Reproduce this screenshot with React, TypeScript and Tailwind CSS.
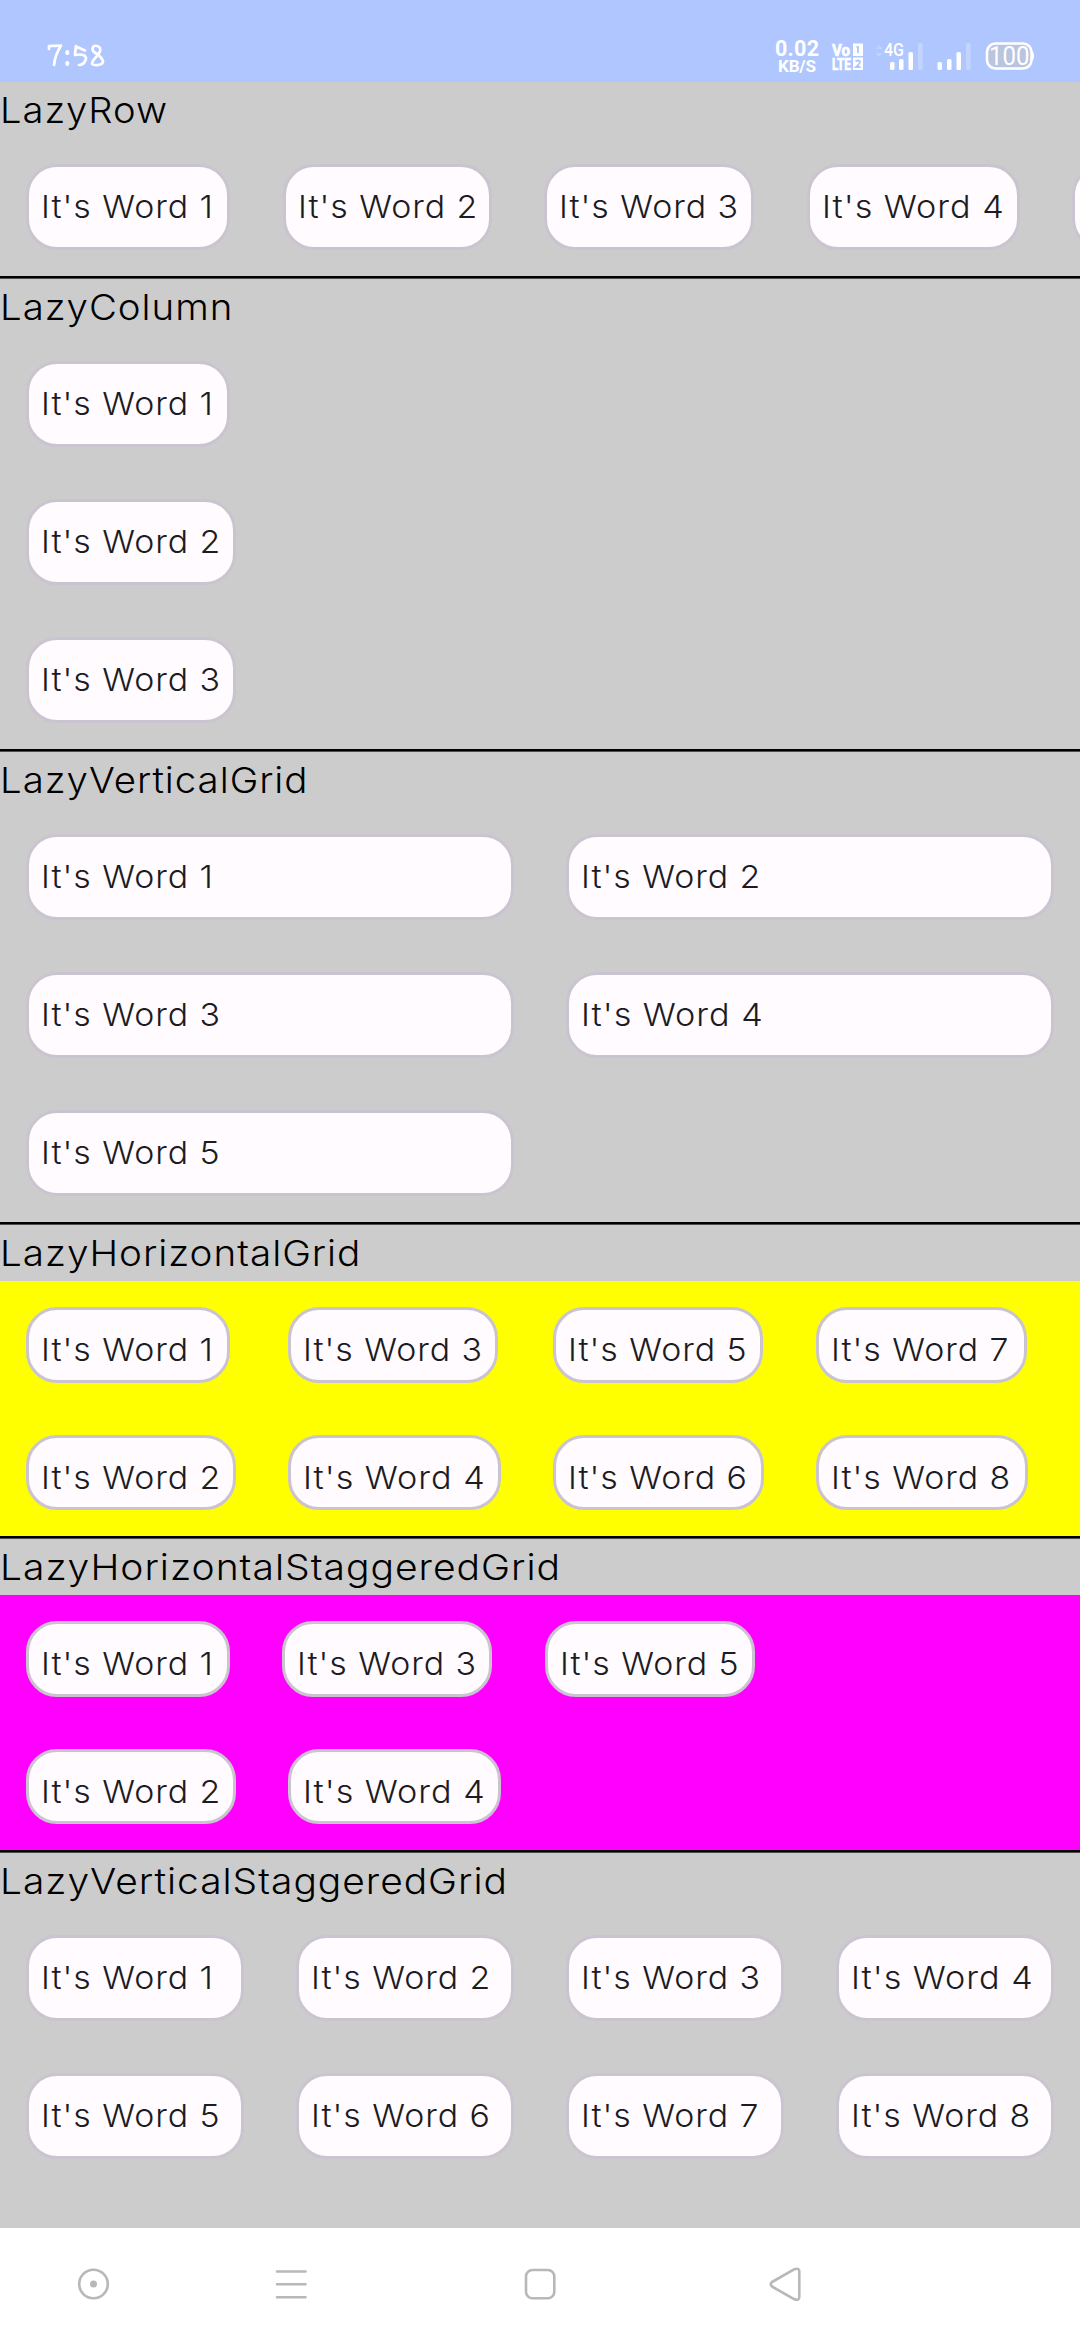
import React from "react";

function Word({ n, short = false, w }: { n: number; short?: boolean; w?: string }) {
  const stretch = n === 4 ? "scale-x-[1.075]" : "scale-x-[1.064]";
  return (
    <div
      className={`shrink-0 rounded-[31px] border-[3px] border-[#cac4d0] bg-[#fffbff] pl-[12px] ${
        short ? "pt-[13px]" : "h-[86px] pt-[13px]"
      } ${w ?? ""}`}
    >
      <div
        className={`h-[54px] w-max origin-left whitespace-nowrap text-[31.8px] leading-[54px] font-light tracking-[0.9px] text-[#1c1b1f] ${stretch}`}
      >
        It's Word {n}
      </div>
    </div>
  );
}

function Title({ children, stretch }: { children: string; stretch: string }) {
  return (
    <h2
      className={`h-[56px] w-max origin-left whitespace-nowrap text-[35.6px] leading-[57px] font-light tracking-[0.9px] text-black ${stretch}`}
    >
      {children}
    </h2>
  );
}

function Divider() {
  return <div className="h-[2.6px] shrink-0 border-b border-[#4d4d4d] bg-black" />;
}

const W: Record<number, string> = {
  1: "w-[204px]",
  2: "w-[209.5px]",
  3: "w-[210px]",
  4: "w-[213px]",
  5: "w-[210px]",
  6: "w-[211px]",
  7: "w-[211px]",
  8: "w-[212px]",
};

function StatusBar() {
  return (
    <header className="h-[82px] bg-[#b0c6ff]">
      <svg width="1080" height="82" viewBox="0 0 1080 82" fill="none">
        <g stroke="#fff" strokeWidth="2.7" strokeLinecap="round" strokeLinejoin="round">
          <path d="M49 49L49 46Q55 46 61 45.500Q55 55 54 65" />
          <path d="M67.300 52v1M67.300 63v1" strokeWidth="4" />
          <path d="M76 46L75 54M76 46.500L85 50.500M75 55Q86 53 86 59Q84 65 79 65" />
          <path d="M100 48Q98 45 94 46Q91 49 94 52Q101 56 103 61Q103 64 100 64.500Q95 66 92 64Q92 61 97 56Q101 52 100 48" />
        </g>
        <g fill="#fff" fontFamily="Roboto, sans-serif">
          <text x="775" y="56" fontSize="21.500" fontWeight="700" textLength="44">0.02</text>
          <text x="778" y="72" fontSize="17" fontWeight="700" textLength="38">KB/S</text>
          <g stroke="#fff" strokeWidth=".7">
            <text x="832" y="56" fontSize="17" fontWeight="700" textLength="18" lengthAdjust="spacingAndGlyphs">Vo</text>
            <text x="832" y="69.500" fontSize="16" fontWeight="700" textLength="19" lengthAdjust="spacingAndGlyphs">LTE</text>
          </g>
          <text x="884" y="56" fontSize="18" fontWeight="500" textLength="20" lengthAdjust="spacingAndGlyphs">4G</text>
        </g>
        <path fill="#fff" d="M853 43.500h10v12.500h-10zM853 57.500h10v12.500h-10z" />
        <path stroke="#b0c6ff" strokeWidth="1.800" d="M856.500 47h1.500v6M855.500 61.500Q858 59.500 860 61.500Q860 63.500 856 67h4.500" />
        <path fill="#c3d3ff" d="M875.500 49l3.500-4 3.500 4zM875.500 53l3.500 4 3.500-4z" />
        <g fill="#fff">
          <rect x="890" y="62" width="4.500" height="8" rx="1.500" />
          <rect x="899" y="59" width="4.500" height="11" rx="1.500" />
          <rect x="908.500" y="52" width="4.500" height="18" rx="1.500" />
          <rect x="918" y="43" width="4.500" height="27" rx="1.500" opacity=".25" />
          <rect x="937.500" y="62" width="4.500" height="8" rx="1.500" />
          <rect x="947" y="59" width="4.500" height="11" rx="1.500" />
          <rect x="956.500" y="52" width="4.500" height="18" rx="1.500" />
          <rect x="966" y="43" width="4.500" height="27" rx="1.500" opacity=".25" />
        </g>
        <rect x="987" y="43.500" width="44.500" height="25" rx="8.500" fill="#b9c4df" stroke="#fff" strokeWidth="2.600" />
        <path fill="#fff" d="M1032 51q2 1 2 5t-2 5z" />
        <text x="989" y="64.500" fontSize="25" fill="#fff" fontFamily="Roboto, sans-serif" textLength="40.500" lengthAdjust="spacingAndGlyphs">100</text>
      </svg>
    </header>
  );
}

function NavBar() {
  return (
    <nav className="h-[112px] bg-white">
      <svg width="1080" height="112" viewBox="0 0 1080 112" fill="none" stroke="#b8b8b8" strokeWidth="2.600">
        <circle cx="93.500" cy="56" r="14.300" />
        <circle cx="93.500" cy="56" r="3.500" fill="#b8b8b8" stroke="none" />
        <path strokeLinecap="round" d="M277 43.500h28.500M277 56.300h28.500M277 69.200h28.500" />
        <rect x="526" y="42" width="28.300" height="28.300" rx="6.500" />
        <path strokeLinejoin="round" d="M772 54L794.500 41.200Q799.300 39.500 799.300 43.500V69Q799.300 73 794.500 71.300L772 58.500Q769.500 56.300 772 54Z" />
      </svg>
    </nav>
  );
}

export default function App() {
  return (
    <div className="flex h-[2340px] w-[1080px] flex-col overflow-hidden bg-[#cccccc] font-['Inter',sans-serif]">
      <StatusBar />
      <section className="h-[194px]">
        <Title stretch="scale-x-[1.072]">LazyRow</Title>
        <div className="flex gap-[52.3px] overflow-hidden py-[26px] pl-[26.3px]">
          {[1, 2, 3, 4, 5].map((n) => <Word key={n} n={n} w={W[n]} />)}
        </div>
      </section>
      <Divider />
      <section className="h-[470.400px]">
        <Title stretch="scale-x-[1.08]">LazyColumn</Title>
        <div className="flex flex-col items-start gap-[52px] py-[26px] pl-[26.3px]">
          {[1, 2, 3].map((n) => <Word key={n} n={n} w={W[n]} />)}
        </div>
      </section>
      <Divider />
      <section className="h-[470.400px]">
        <Title stretch="scale-x-[1.08]">LazyVerticalGrid</Title>
        <div className="grid grid-cols-2 gap-[52px] px-[26px] py-[26px]">
          {[1, 2, 3, 4, 5].map((n) => <Word key={n} n={n} />)}
        </div>
      </section>
      <Divider />
      <section className="h-[311.400px]">
        <Title stretch="scale-x-[1.086]">LazyHorizontalGrid</Title>
        <div className="grid h-[255.400px] grid-flow-col grid-cols-[262px_265px_263px_264px] grid-rows-[76px_75px] justify-start gap-y-[52px] bg-[#ffff00] py-[26px] pl-[26px]">
          {[1, 2, 3, 4, 5, 6, 7, 8].map((n) => <Word key={n} n={n} short w={W[n]} />)}
        </div>
      </section>
      <Divider />
      <section className="h-[311.400px]">
        <Title stretch="scale-x-[1.097]">LazyHorizontalStaggeredGrid</Title>
        <div className="flex h-[255.400px] flex-col gap-[52px] bg-[#ff00ff] py-[26px] pl-[26px]">
          <div className="flex h-[76px] gap-[52.300px]">
            {[1, 3, 5].map((n) => <Word key={n} n={n} short w={W[n]} />)}
          </div>
          <div className="flex h-[75px] gap-[52.300px]">
            {[2, 4].map((n) => <Word key={n} n={n} short w={W[n]} />)}
          </div>
        </div>
      </section>
      <Divider />
      <section className="flex-1">
        <Title stretch="scale-x-[1.094]">LazyVerticalStaggeredGrid</Title>
        <div className="grid grid-cols-4 gap-[52px] px-[26px] py-[26px]">
          {[1, 2, 3, 4, 5, 6, 7, 8].map((n) => <Word key={n} n={n} />)}
        </div>
      </section>
      <NavBar />
    </div>
  );
}
